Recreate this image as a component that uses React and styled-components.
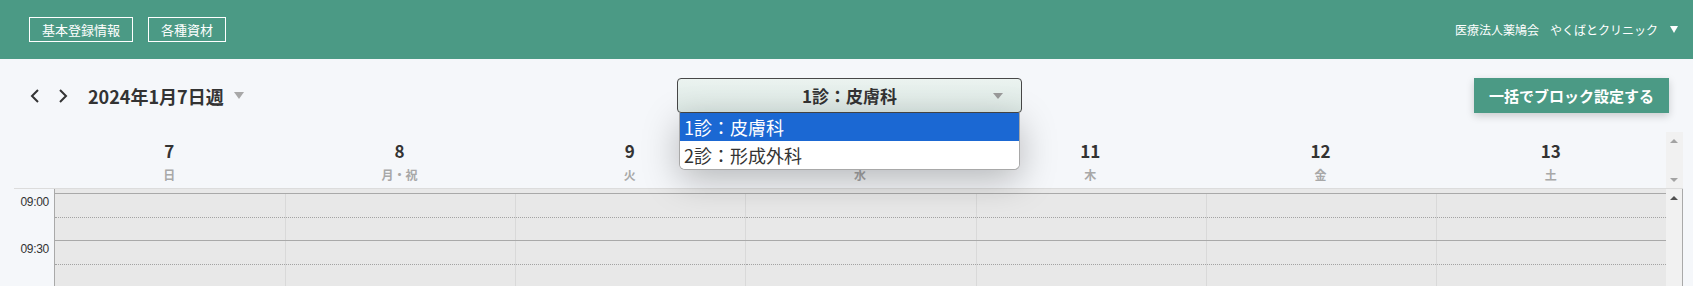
import React from 'react';
import styled, { createGlobalStyle } from 'styled-components';

const GlobalStyle = createGlobalStyle`
  body {
    margin: 0;
    background-color: #f5f7fa;
    font-family: "Noto Sans CJK JP", "Noto Sans", sans-serif;
    color: #333;
  }
`;

const Header = styled.header`
  display: flex;
  align-items: center;
  justify-content: space-between;
  height: 59px;
  padding: 0 15px 0 29px;
  background-color: #4b9a85;
  box-sizing: border-box;
`;

const NavGroup = styled.div`
  display: flex;
  gap: 15px;
  margin-top: -1px;
`;

const NavButton = styled.button`
  height: 25px;
  padding: 0 12px;
  border: 1px solid #fff;
  background: transparent;
  color: #fff;
  font-family: inherit;
  font-size: 13px;
  line-height: 23px;
  cursor: pointer;
`;

const Account = styled.div`
  display: flex;
  align-items: center;
  color: #fff;
  font-size: 12px;
  margin-top: -1px;
`;

const ClinicName = styled.span`
  margin-left: 11px;
`;

const Toolbar = styled.div`
  display: grid;
  grid-template-columns: 1fr auto 1fr;
  align-items: center;
  padding: 19px 24px 0 30px;
  height: 35px;
`;

const WeekNav = styled.div`
  display: flex;
  align-items: center;
`;

const ArrowButton = styled.button`
  display: flex;
  align-items: center;
  justify-content: center;
  width: 10px;
  height: 14px;
  padding: 0;
  margin-right: ${p => p.$gap}px;
  border: none;
  background: none;
  cursor: pointer;
`;

const WeekTitle = styled.div`
  font-size: 18px;
  font-weight: 700;
  color: #333;
  display: flex;
  align-items: center;
`;

const Caret = styled.span`
  display: inline-block;
  width: 0;
  height: 0;
  border-left: ${p => p.$w / 2}px solid transparent;
  border-right: ${p => p.$w / 2}px solid transparent;
  border-top: ${p => p.$h}px solid ${p => p.$color};
  margin-left: ${p => p.$ml}px;
`;

const SelectWrap = styled.div`
  position: relative;
  width: 345px;
`;

const SelectBox = styled.div`
  position: relative;
  height: 35px;
  box-sizing: border-box;
  border: 1px solid #474747;
  border-radius: 4px;
  background: linear-gradient(#ebf3f0, #dce8e4);
  display: flex;
  align-items: center;
  justify-content: center;
  font-size: 17px;
  font-weight: 700;
  color: #333;
`;

const SelectCaret = styled.span`
  position: absolute;
  right: 18px;
  top: 14px;
  width: 0;
  height: 0;
  border-left: 5px solid transparent;
  border-right: 5px solid transparent;
  border-top: 6px solid #9a9a9a;
`;

const Dropdown = styled.ul`
  position: absolute;
  top: 35px;
  left: 2px;
  right: 2px;
  margin: 0;
  padding: 0;
  list-style: none;
  background: #fff;
  border: 1px solid #a8a8a8;
  border-top: none;
  border-radius: 0 0 6px 6px;
  overflow: hidden;
  box-shadow: 0 10px 36px rgba(0, 0, 0, 0.26);
  z-index: 10;
`;

const Option = styled.li`
  height: 28px;
  line-height: 28px;
  padding-left: 4px;
  font-size: 18px;
  background: ${p => (p.$selected ? '#1b68d3' : '#fff')};
  color: ${p => (p.$selected ? '#fff' : '#333')};
`;

const Actions = styled.div`
  display: flex;
  justify-content: flex-end;
`;

const BlockButton = styled.button`
  width: 195px;
  height: 35px;
  border: none;
  background-color: #4b9a85;
  color: #fff;
  font-family: inherit;
  font-size: 15px;
  font-weight: 700;
  box-shadow: 0 3px 8px rgba(0, 0, 0, 0.18);
  cursor: pointer;
`;

const Calendar = styled.div`
  margin-top: 19px;
  padding-right: 10px;
`;

const HeadRow = styled.div`
  display: flex;
  margin-left: 14px;
  height: 57px;
  border-bottom: 1px solid #dcdcdc;
  box-sizing: border-box;
`;

const HeadGutter = styled.div`
  width: 40px;
`;

const DayHead = styled.div`
  flex: 1;
  display: flex;
  flex-direction: column;
  align-items: center;
  padding-top: 6px;
`;

const DayNum = styled.div`
  font-size: 17px;
  font-weight: 700;
  line-height: 26px;
  color: #333;
`;

const DayName = styled.div`
  font-size: 12px;
  font-weight: 700;
  line-height: 18px;
  margin-top: 2px;
  color: #a8a8a8;
`;

const ScrollBar = styled.div`
  width: 17px;
  display: flex;
  flex-direction: column;
  align-items: center;
  justify-content: ${p => (p.$head ? 'space-between' : 'flex-start')};
  padding: ${p => (p.$head ? '7px 0 6px' : '7px 0 0')};
  box-sizing: border-box;
  background-color: #f1f1f1;
  border-right: ${p => (p.$head ? 'none' : '1px solid #a9a9a9')};
`;

const ScrollArrow = styled.span`
  width: 0;
  height: 0;
  border-left: 4px solid transparent;
  border-right: 4px solid transparent;
  ${p => (p.$down ? 'border-top' : 'border-bottom')}: 4px solid ${p => p.$color};
`;

const Body = styled.div`
  display: flex;
  height: 97px;
  overflow: hidden;
`;

const TimeGutter = styled.div`
  width: 54px;
  padding-top: 4px;
  flex-shrink: 0;
`;

const TimeLabel = styled.div`
  height: 47px;
  box-sizing: border-box;
  padding: 2px 5px 0 0;
  text-align: right;
  font-family: "Liberation Sans", Arial, sans-serif;
  font-size: 12px;
  letter-spacing: -0.3px;
  line-height: 14px;
  color: #333;
`;

const Grid = styled.div`
  flex: 1;
  padding-top: 4px;
  background-color: #e8e8e8;
  border-left: 1px solid #a9a9a9;
  display: flex;
  flex-direction: column;
`;

const SlotRow = styled.div`
  display: grid;
  grid-template-columns: repeat(7, 1fr);
  height: 47px;
  flex-shrink: 0;
  box-sizing: border-box;
  border-top: 1px solid #a9a9a9;
`;

const Cell = styled.div`
  border-left: ${p => (p.$first ? 'none' : '1px solid #d9d9d9')};
  display: flex;
  flex-direction: column;
`;

const HalfSlot = styled.div`
  height: 23px;
  border-bottom: 1px dotted #a3a3a3;
`;

const days = [
  { num: 7, name: '日' },
  { num: 8, name: '月・祝' },
  { num: 9, name: '火' },
  { num: 10, name: '水' },
  { num: 11, name: '木' },
  { num: 12, name: '金' },
  { num: 13, name: '土' },
];

const slots = ['09:00', '09:30'];

function Chevron({ dir }) {
  const points = dir === 'left' ? '8,1 2,7 8,13' : '2,1 8,7 2,13';
  return (
    <svg width="10" height="14" viewBox="0 0 10 14">
      <polyline points={points} fill="none" stroke="#333" strokeWidth="2" />
    </svg>
  );
}

function App() {
  return (
    <>
      <GlobalStyle />
      <Header>
        <NavGroup>
          <NavButton>基本登録情報</NavButton>
          <NavButton>各種資材</NavButton>
        </NavGroup>
        <Account>
          <span>医療法人薬鳩会</span>
          <ClinicName>やくばとクリニック</ClinicName>
          <Caret $w={9} $h={7} $color="#fff" $ml={12} />
        </Account>
      </Header>

      <Toolbar>
        <WeekNav>
          <ArrowButton $gap={18}><Chevron dir="left" /></ArrowButton>
          <ArrowButton $gap={20}><Chevron dir="right" /></ArrowButton>
          <WeekTitle>
            2024年1月7日週
            <Caret $w={10} $h={7} $color="#a8a8a8" $ml={10} />
          </WeekTitle>
        </WeekNav>
        <SelectWrap>
          <SelectBox>
            1診：皮膚科
            <SelectCaret />
          </SelectBox>
          <Dropdown>
            <Option $selected>1診：皮膚科</Option>
            <Option>2診：形成外科</Option>
          </Dropdown>
        </SelectWrap>
        <Actions>
          <BlockButton>一括でブロック設定する</BlockButton>
        </Actions>
      </Toolbar>

      <Calendar>
        <HeadRow>
          <HeadGutter />
          {days.map(d => (
            <DayHead key={d.num}>
              <DayNum>{d.num}</DayNum>
              <DayName>{d.name}</DayName>
            </DayHead>
          ))}
          <ScrollBar $head>
            <ScrollArrow $color="#a3a3a3" />
            <ScrollArrow $down $color="#a3a3a3" />
          </ScrollBar>
        </HeadRow>
        <Body>
          <TimeGutter>
            {slots.map(t => (
              <TimeLabel key={t}>{t}</TimeLabel>
            ))}
          </TimeGutter>
          <Grid>
            {[...slots, 'next'].map(t => (
              <SlotRow key={t}>
                {days.map((d, i) => (
                  <Cell key={d.num} $first={i === 0}>
                    <HalfSlot />
                  </Cell>
                ))}
              </SlotRow>
            ))}
          </Grid>
          <ScrollBar>
            <ScrollArrow $color="#505050" />
          </ScrollBar>
        </Body>
      </Calendar>
    </>
  );
}

export default App;
